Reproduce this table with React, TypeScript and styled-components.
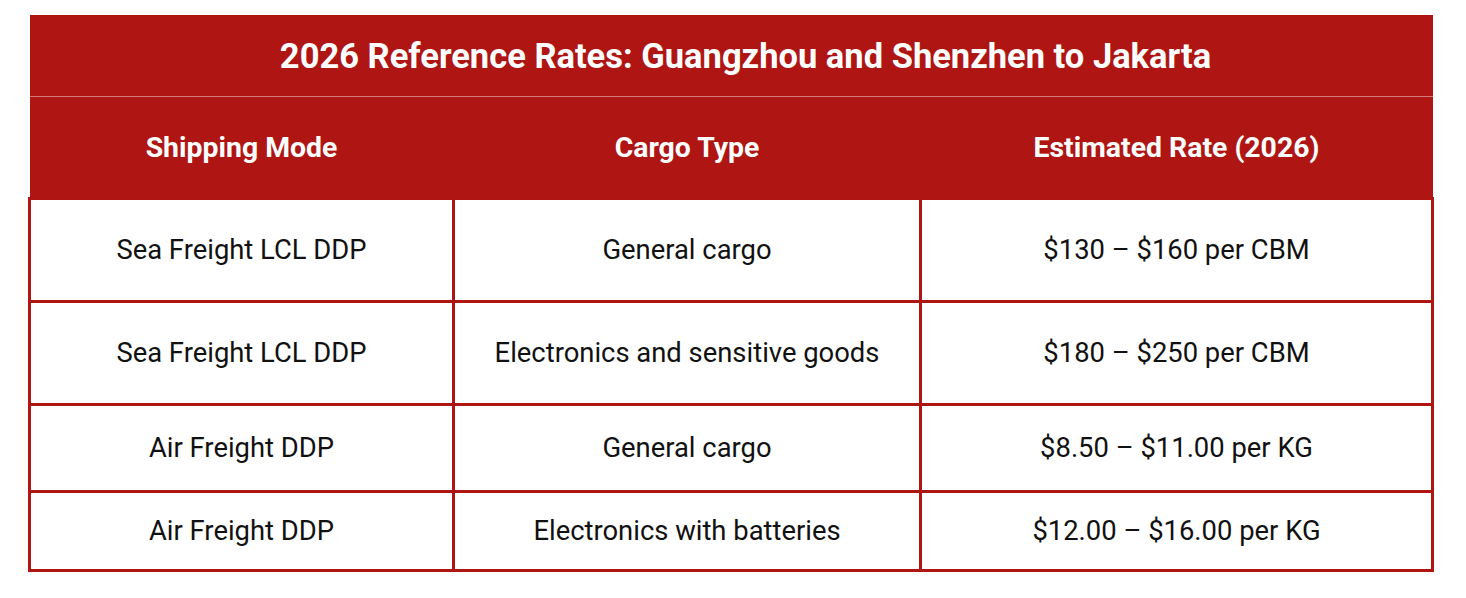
import React from "react"
import styled, { createGlobalStyle } from "styled-components"

const GlobalStyle = createGlobalStyle`
  html, body {
    margin: 0;
    padding: 0;
    background: #ffffff;
  }
  body {
    font-family: Roboto, "Liberation Sans", sans-serif;
  }
`

const RED = "#af1513"

const rows = [
  { mode: "Sea Freight LCL DDP", cargo: "General cargo", rate: "$130 – $160 per CBM", h: 103 },
  { mode: "Sea Freight LCL DDP", cargo: "Electronics and sensitive goods", rate: "$180 – $250 per CBM", h: 103 },
  { mode: "Air Freight DDP", cargo: "General cargo", rate: "$8.50 – $11.00 per KG", h: 87 },
  { mode: "Air Freight DDP", cargo: "Electronics with batteries", rate: "$12.00 – $16.00 per KG", h: 79 },
]

const Page = styled.div`
  padding: 15px 33px 0 28px;
`

const Table = styled.table`
  width: 1403px;
  border-collapse: collapse;
  table-layout: fixed;
  color: #111111;
`

const Caption = styled.th`
  height: 81px;
  padding: 0 0 0 29px;
  background: ${RED};
  color: #ffffff;
  font-size: 34.5px;
  font-weight: 700;
  text-align: center;
  border-bottom: 1px solid #d47a78;
`

const HeadCell = styled.th`
  height: 100px;
  padding: 0;
  background: ${RED};
  color: #ffffff;
  font-size: 28.4px;
  font-weight: 700;
  text-align: center;
`

const Row = styled.tr<{ $h: number }>`
  height: ${(p) => p.$h}px;
`

const Cell = styled.td`
  padding: 0;
  border: 3px solid ${RED};
  font-size: 27.4px;
  font-weight: 400;
  text-align: center;
  vertical-align: middle;
`

export default function App() {
  return (
    <>
      <GlobalStyle />
      <Page>
        <Table>
          <colgroup>
            <col style={{ width: 424 }} />
            <col style={{ width: 467 }} />
            <col style={{ width: 512 }} />
          </colgroup>
          <thead>
            <tr>
              <Caption colSpan={3}>2026 Reference Rates: Guangzhou and Shenzhen to Jakarta</Caption>
            </tr>
            <tr>
              <HeadCell>Shipping Mode</HeadCell>
              <HeadCell>Cargo Type</HeadCell>
              <HeadCell>Estimated Rate (2026)</HeadCell>
            </tr>
          </thead>
          <tbody>
            {rows.map((r, i) => (
              <Row key={i} $h={r.h}>
                <Cell>{r.mode}</Cell>
                <Cell>{r.cargo}</Cell>
                <Cell>{r.rate}</Cell>
              </Row>
            ))}
          </tbody>
        </Table>
      </Page>
    </>
  )
}
